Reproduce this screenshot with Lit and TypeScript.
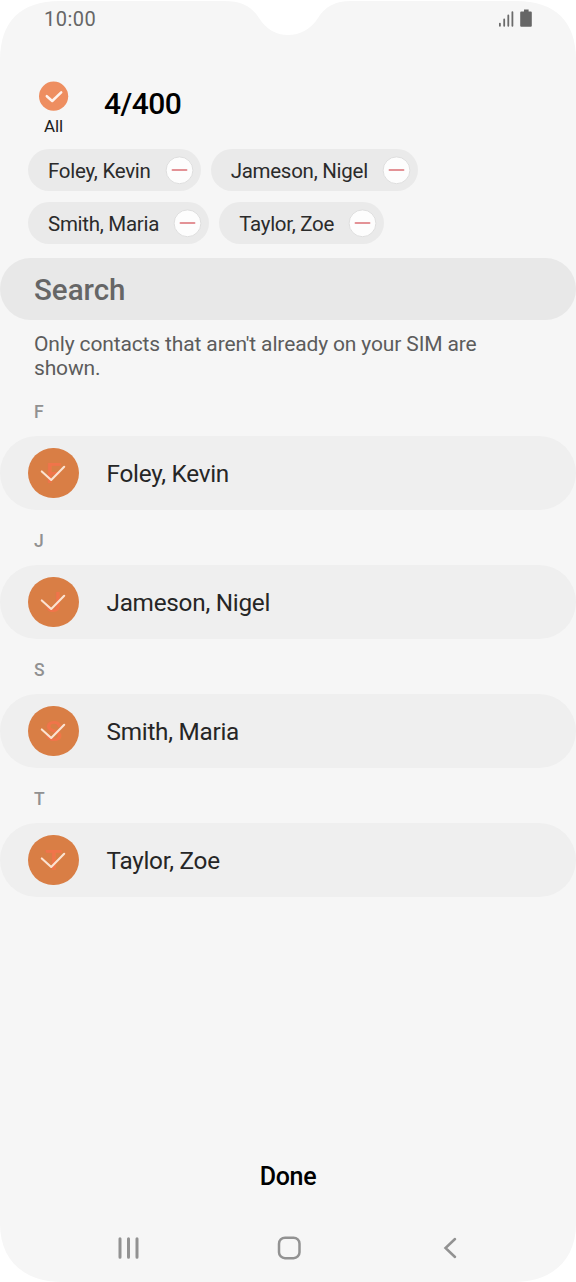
import { LitElement, html, css } from "lit";
import { customElement, property } from "lit/decorators.js";

const contacts = ["Foley, Kevin", "Jameson, Nigel", "Smith, Maria", "Taylor, Zoe"];

@customElement("status-bar")
class StatusBar extends LitElement {
  static styles = css`
    :host { display: flex; height: 37px; align-items: center; justify-content: space-between; padding: 0 43px 0 44px; }
    .time { font-size: 20px; letter-spacing: 0.5px; color: #666; }
    .icons { display: block; }
  `;
  render() {
    return html`
      <span class="time">10:00</span>
      <svg class="icons" width="35" height="20" viewBox="0 0 35 20">
        <g stroke="#6b6b6b" stroke-width="1.8" stroke-linecap="round">
          <path d="M1.9 14.6v2.2M6.2 10.4v6.4M10.3 6.4v10.4M14.4 3.2v13.6" />
        </g>
        <path fill="#666" d="M26 0.6h4.6v1.9h2.2q1 0 1 1v13.3q0 1-1 1h-9.6q-1 0-1-1v-13.3q0-1 1-1h2.8z" />
      </svg>
    `;
  }
}

@customElement("contact-chip")
class ContactChip extends LitElement {
  @property() name = "";
  static styles = css`
    :host { display: flex; align-items: center; height: 42px; box-sizing: border-box; padding: 0 7px 0 20px; border-radius: 21px; background: #eaeaea; gap: 14px; }
    .name { font-size: 20.5px; letter-spacing: -0.27px; color: #2b2b2b; white-space: nowrap; position: relative; top: 1px; }
    .remove { display: block; }
  `;
  render() {
    return html`
      <span class="name">${this.name}</span>
      <svg class="remove" width="29" height="29" viewBox="0 0 29 29">
        <circle cx="14.5" cy="14.3" r="13.4" fill="#fdfdfd" stroke="#dedede" stroke-width="1" />
        <path d="M7.5 14h14" stroke="#e39296" stroke-width="1.9" stroke-linecap="round" />
      </svg>
    `;
  }
}

@customElement("contact-section")
class ContactSection extends LitElement {
  @property() name = "";
  static styles = css`
    :host { display: block; }
    .letter { height: 55px; line-height: 63px; padding-left: 34px; font-size: 17.5px; font-weight: 500; color: #919191; }
    .row { display: flex; align-items: center; height: 74px; border-radius: 37px; background: #efefef; padding-left: 28px; gap: 27.5px; }
    .avatar { display: grid; width: 51px; height: 51px; }
    .disc { grid-area: 1 / 1; width: 50.5px; height: 50.5px; border-radius: 50%; background: #d97e45; }
    .initial { grid-area: 1 / 1; text-align: center; font-size: 28px; font-weight: 500; line-height: 52px; color: #f0744a; }
    .tick { grid-area: 1 / 1; display: block; }
    .name { font-size: 24.3px; letter-spacing: -0.25px; color: #262626; }
  `;
  render() {
    return html`
      <div class="letter">${this.name[0]}</div>
      <div class="row">
        <div class="avatar">
          <div class="disc"></div>
          <div class="initial">${this.name[0]}</div>
          <svg class="tick" width="51" height="51" viewBox="0 0 51 51">
            <path d="M13.8 23.4L23.2 32L36.2 18.8" fill="none" stroke="#fbe3d2" stroke-width="2.1" stroke-linecap="round" stroke-linejoin="round" />
          </svg>
        </div>
        <span class="name">${this.name}</span>
      </div>
    `;
  }
}

@customElement("app-root")
class AppRoot extends LitElement {
  static styles = css`
    :host { display: block; background: #fff; font-family: Roboto, "Liberation Sans", sans-serif; }
    .screen {
      display: flex; flex-direction: column; height: 1282px; width: 576px; background: #f6f6f6;
      clip-path: path("M0 60C0 22 20 1 60 1H224C242 1 252 7 259 18C266 29 276 35 288 35C300 35 311 29 318 18C325 7 334 1 352 1H516C556 1 576 22 576 60V1224C576 1260 552 1282 514 1282H62C24 1282 0 1260 0 1224Z");
    }
    .header { display: flex; height: 112px; box-sizing: border-box; padding: 44px 0 0 34px; }
    .all { display: flex; flex-direction: column; align-items: center; width: 39px; }
    .all-label { font-size: 17px; letter-spacing: -0.1px; line-height: 20px; margin-top: 5px; color: #1c1c1c; }
    .all-check { display: block; }
    .count { margin: 4px 0 0 31px; font-size: 30px; letter-spacing: -0.5px; line-height: 37px; font-weight: 500; color: #000; }
    .chips { display: flex; flex-wrap: wrap; gap: 11px 10px; padding: 0 28px; }
    .search { height: 61.5px; line-height: 65px; margin-top: 14px; border-radius: 31px; padding-left: 34px; background: #e8e8e8; color: #666; font-size: 29.5px; font-weight: 500; }
    .info { margin: 12.5px 34px 0; font-size: 21px; letter-spacing: -0.14px; line-height: 24px; height: 48px; color: #5c5c5c; }
    .list { margin-top: 1px; }
    .done { margin-top: auto; height: 48px; line-height: 47px; text-align: center; font-size: 25px; letter-spacing: -0.3px; font-weight: 500; color: #000; }
    .nav { display: flex; justify-content: space-between; align-items: center; height: 68px; margin-top: 13px; padding: 0 113px 0 116px; flex: none; box-sizing: border-box; }
  `;
  render() {
    return html`
      <div class="screen">
        <status-bar></status-bar>
        <div class="header">
          <div class="all">
            <svg class="all-check" width="30" height="30" viewBox="0 0 30 30">
              <circle cx="14.6" cy="15.2" r="14.6" fill="#ee8e60" />
              <path d="M7.8 15.2L13.2 20L22.2 11.3" fill="none" stroke="#fff3ec" stroke-width="2.5" stroke-linecap="round" stroke-linejoin="round" />
            </svg>
            <span class="all-label">All</span>
          </div>
          <span class="count">4/400</span>
        </div>
        <div class="chips">${contacts.map((c) => html`<contact-chip .name=${c}></contact-chip>`)}</div>
        <div class="search">Search</div>
        <div class="info">Only contacts that aren't already on your SIM are shown.</div>
        <div class="list">${contacts.map((c) => html`<contact-section .name=${c}></contact-section>`)}</div>
        <div class="done">Done</div>
        <div class="nav">
          <svg width="26" height="26" viewBox="0 0 26 26"><path d="M4 3.8v18.4M12.5 3.8v18.4M21 3.8v18.4" stroke="#929292" stroke-width="3" stroke-linecap="round" /></svg>
          <svg width="26" height="26" viewBox="0 0 26 26"><rect x="2" y="2.7" width="20.5" height="20.5" rx="6" fill="none" stroke="#929292" stroke-width="2.5" /></svg>
          <svg width="26" height="26" viewBox="0 0 26 26"><path d="M18 4L8.5 13L18 22" fill="none" stroke="#929292" stroke-width="2.5" stroke-linecap="round" /></svg>
        </div>
      </div>
    `;
  }
}
